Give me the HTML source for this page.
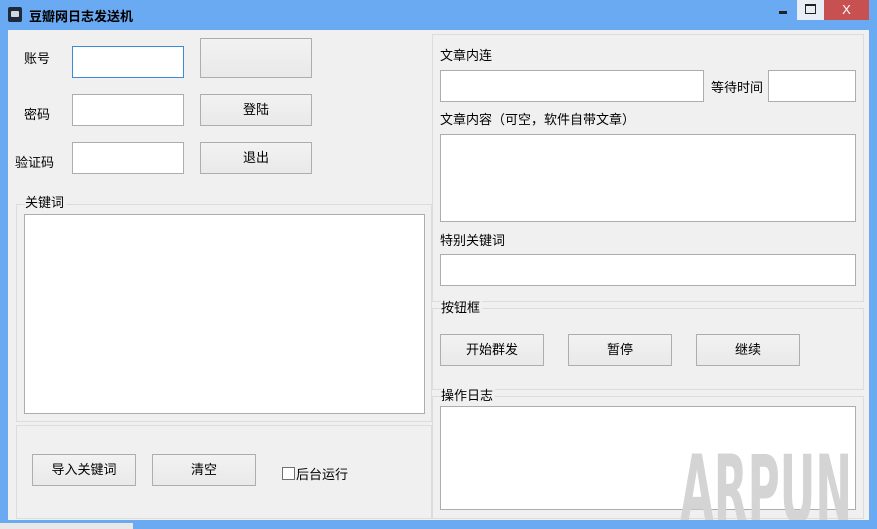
<!DOCTYPE html>
<html><head><meta charset="utf-8"><style>
*{margin:0;padding:0;box-sizing:border-box}
body{width:877px;height:529px;background:#6aaaf3;position:relative;overflow:hidden;font-family:"Liberation Sans","Noto Sans CJK SC","WenQuanYi Zen Hei",sans-serif;font-size:12px;color:#000}
.a{position:absolute}
.client{left:8px;top:30px;width:861px;height:490px;background:#f0f0f0}
.in{position:absolute;background:#fff;border:1px solid #abadb3}
.btn{position:absolute;background:linear-gradient(#f2f2f2,#e9e9e9);border:1px solid #adadad;text-align:center;font-size:13px}
.grp{position:absolute;border:1px solid #dcdcdc}
.lbl{position:absolute;font-size:13px;white-space:nowrap}
.gl{position:absolute;font-size:13px;background:#f0f0f0;padding-right:2px;line-height:14px}
</style></head><body>
<div class="a" style="left:0;top:0;width:877px;height:30px;background:#6aaaf3"></div>
<div class="a" style="left:8px;top:7px;width:14px;height:15px;background:#1e2a3a;border-radius:2px"></div>
<div class="a" style="left:11px;top:11px;width:8px;height:6px;background:#cfd8e0;border-radius:1px"></div>
<div class="lbl" style="left:29px;top:6px;font-weight:bold;font-size:13px">豆瓣网日志发送机</div>
<div class="a" style="left:779px;top:11px;width:8px;height:3px;background:#222"></div>
<div class="a" style="left:797px;top:0;width:27px;height:20px;background:#e8eef6"></div>
<div class="a" style="left:805px;top:4px;width:11px;height:10px;border:1px solid #222;border-top-width:2px"></div>
<div class="a" style="left:824px;top:0;width:45px;height:20px;background:#c75050;color:#fff;text-align:center;font-size:13px;line-height:20px">X</div>
<div class="a client"></div>

<div class="lbl" style="left:24px;top:48px">账号</div>
<div class="in" style="left:72px;top:46px;width:112px;height:32px;border-color:#3c8bd6"></div>
<div class="btn" style="left:200px;top:38px;width:112px;height:40px"></div>
<div class="lbl" style="left:24px;top:104px">密码</div>
<div class="in" style="left:72px;top:94px;width:112px;height:32px"></div>
<div class="btn" style="left:200px;top:94px;width:112px;height:32px;line-height:30px">登陆</div>
<div class="lbl" style="left:15px;top:152px">验证码</div>
<div class="in" style="left:72px;top:142px;width:112px;height:32px"></div>
<div class="btn" style="left:200px;top:142px;width:112px;height:32px;line-height:30px">退出</div>

<div class="grp" style="left:16px;top:204px;width:416px;height:218px"></div>
<div class="gl" style="left:25px;top:196px">关键词</div>
<div class="in" style="left:24px;top:214px;width:401px;height:200px"></div>
<div class="grp" style="left:16px;top:425px;width:416px;height:94px"></div>
<div class="btn" style="left:32px;top:454px;width:104px;height:32px;line-height:30px">导入关键词</div>
<div class="btn" style="left:152px;top:454px;width:104px;height:32px;line-height:30px">清空</div>
<div class="a" style="left:282px;top:467px;width:13px;height:13px;background:#fff;border:1px solid #707070"></div>
<div class="lbl" style="left:296px;top:464px">后台运行</div>

<div class="grp" style="left:432px;top:34px;width:432px;height:268px"></div>
<div class="lbl" style="left:440px;top:45px">文章内连</div>
<div class="in" style="left:440px;top:70px;width:264px;height:32px"></div>
<div class="lbl" style="left:711px;top:77px">等待时间</div>
<div class="in" style="left:768px;top:70px;width:88px;height:32px"></div>
<div class="lbl" style="left:440px;top:109px">文章内容（可空，软件自带文章）</div>
<div class="in" style="left:440px;top:134px;width:416px;height:88px"></div>
<div class="lbl" style="left:440px;top:230px">特别关键词</div>
<div class="in" style="left:440px;top:254px;width:416px;height:32px"></div>

<div class="grp" style="left:432px;top:308px;width:432px;height:82px"></div>
<div class="gl" style="left:441px;top:301px">按钮框</div>
<div class="btn" style="left:440px;top:334px;width:104px;height:32px;line-height:30px">开始群发</div>
<div class="btn" style="left:568px;top:334px;width:104px;height:32px;line-height:30px">暂停</div>
<div class="btn" style="left:696px;top:334px;width:104px;height:32px;line-height:30px">继续</div>

<div class="grp" style="left:432px;top:396px;width:432px;height:123px"></div>
<div class="gl" style="left:441px;top:389px">操作日志</div>
<div class="in" style="left:440px;top:406px;width:416px;height:104px"></div>
<svg class="a" style="left:0;top:0" width="877" height="520"><text x="680" y="522" font-family="DejaVu Sans" font-weight="bold" font-size="94" fill="#d4d4d4" textLength="172" lengthAdjust="spacingAndGlyphs">ARPUN</text></svg>
<div class="a" style="left:0;top:523px;width:133px;height:6px;background:#e8e8e8"></div>
</body></html>
